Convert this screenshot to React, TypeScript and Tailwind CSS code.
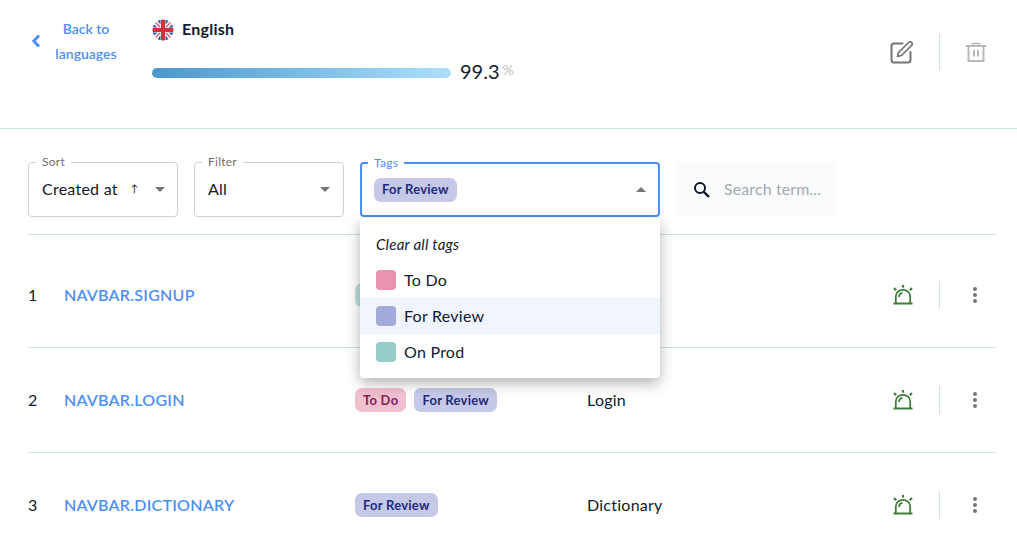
import React from "react";

const rows = [
  { id: 1, key: "NAVBAR.SIGNUP", tags: ["On Prod"], value: "Sign up" },
  { id: 2, key: "NAVBAR.LOGIN", tags: ["To Do", "For Review"], value: "Login" },
  { id: 3, key: "NAVBAR.DICTIONARY", tags: ["For Review"], value: "Dictionary" },
];

const Chip = ({ label }: { label: string }) => {
  if (label === "To Do") {
    return <span className="rounded-[7px] bg-[#f0bfd0] px-2 pt-px h-6 flex items-center text-[13px] font-bold text-[#8a1f55]">{label}</span>;
  }
  if (label === "On Prod") {
    return <span className="rounded-[7px] bg-[#bfe0dc] px-2 pt-px h-6 flex items-center text-[13px] font-bold text-[#17635a]">{label}</span>;
  }
  return <span className="rounded-[7px] bg-[#c5c8e6] px-2 pt-px h-6 flex items-center text-[13px] font-bold text-[#232a7c]">{label}</span>;
};

const Caret = ({ up }: { up?: boolean }) => (
  <svg width="10" height="5" viewBox="0 0 10 5" className="shrink-0">
    <path d={up ? "M0 5 L5 0 L10 5 Z" : "M0 0 L5 5 L10 0 Z"} fill="#757575" />
  </svg>
);

const Flag = () => (
  <svg width="22" height="22" viewBox="0 0 22 22" className="shrink-0">
    <defs>
      <clipPath id="flag-clip">
        <circle cx="11" cy="11" r="10.500" />
      </clipPath>
    </defs>
    <g clipPath="url(#flag-clip)">
      <rect width="22" height="22" fill="#f4f4f4" />
      <path d="M4.500 1 L8.500 1 L8.500 5.500 Z M13.500 5.500 L13.500 1 L17.500 1 Z M1 4.500 L5.500 8.500 L1 8.500 Z M21 4.500 L16.500 8.500 L21 8.500 Z M1 17.500 L5.500 13.500 L1 13.500 Z M21 17.500 L16.500 13.500 L21 13.500 Z M8.500 21 L4.500 21 L8.500 16.500 Z M13.500 21 L17.500 21 L13.500 16.500 Z" fill="#3a5ca8" />
      <path d="M0 0 L8 8 M22 0 L14 8 M0 22 L8 14 M22 22 L14 14" stroke="#d9515c" strokeWidth="1.100" />
      <rect x="9" width="4" height="22" fill="#d32f3c" />
      <rect y="9" width="22" height="4" fill="#d32f3c" />
    </g>
  </svg>
);

const EditIcon = () => (
  <svg width="24" height="24" viewBox="0 0 24 24" fill="none" stroke="#737373" strokeWidth="2">
    <path d="M12.500 3.500 H4 a2.500 2.500 0 0 0 -2.500 2.500 V20 a2.500 2.500 0 0 0 2.500 2.500 H18 a2.500 2.500 0 0 0 2.500 -2.500 V12" strokeLinecap="round" />
    <path d="M7.500 16.500 L8.500 12.500 L18.500 2.500 C19.500 1.500 20.800 1.500 21.600 2.400 C22.500 3.200 22.500 4.500 21.500 5.500 L11.500 15.500 Z" strokeWidth="1.700" strokeLinejoin="round" />
  </svg>
);

const TrashIcon = () => (
  <svg width="20" height="20" viewBox="0 0 20 20" fill="none" stroke="#b8b8b8" strokeWidth="2">
    <path d="M0 4 H20" />
    <path d="M6.500 4 V1.500 H13.500 V4" strokeWidth="1.600" />
    <path d="M2.500 4 V19 H17.500 V4" />
    <path d="M8 8 V14.500 M12 8 V14.500" />
  </svg>
);

const SirenIcon = () => (
  <svg width="20" height="20" viewBox="0 0 20 20" fill="none" stroke="#3f7d3a" className="shrink-0">
    <path d="M2.800 18 V11.500 C2.800 7.500 6 4.800 10 4.800 C14 4.800 17.200 7.500 17.200 11.500 V18" strokeWidth="1.800" />
    <path d="M6 12 C6 9.800 7.400 8.300 9.500 7.900" strokeWidth="1.800" />
    <path d="M0.500 18.500 H19.500" strokeWidth="2" />
    <path d="M10 0 V2.600" strokeWidth="2.200" />
    <path d="M1 3 L3.200 5.200 M19 3 L16.800 5.200" strokeWidth="2.200" />
  </svg>
);

const Dots = () => (
  <div className="flex flex-col gap-[2px]">
    <span className="size-1 rounded-full bg-[#757575]" />
    <span className="size-1 rounded-full bg-[#757575]" />
    <span className="size-1 rounded-full bg-[#757575]" />
  </div>
);

const Legend = ({ label, focused }: { label: string; focused?: boolean }) => (
  <span className={focused
    ? "absolute -top-[8px] left-[6px] bg-white px-[6px] text-xs leading-[14px] text-[#4d8ff7]"
    : "absolute -top-[8px] left-[7px] bg-white px-[6px] text-xs leading-[14px] text-[#6f6f6f]"}>
    {label}
  </span>
);

const MenuItem = ({ label, color, active }: { label: string; color: string; active?: boolean }) => (
  <div className={active ? "flex h-9 items-center gap-2 bg-[#f0f4fc] px-4" : "flex h-9 items-center gap-2 px-4"}>
    <span className={`size-5 rounded-[4px] ${color}`} />
    <span>{label}</span>
  </div>
);

export default function App() {
  return (
    <div className="h-[555px] overflow-hidden bg-white font-['Lato',sans-serif] text-base tracking-[0.25px] text-[#111a2e]">
      <header className="flex h-[129px] items-start border-b border-[#cfe2e8] pl-[31px] pr-[31px]">
        <a className="mt-[16px] flex items-center gap-[13px] text-sm font-semibold leading-[25px] tracking-normal text-[#4d8ff7]">
          <svg width="10" height="14" viewBox="0 0 10 14" fill="none" stroke="#4d8ff7" strokeWidth="2.800" className="shrink-0">
            <path d="M8 1.500 L2.800 7 L8 12.500" />
          </svg>
          <span className="w-[64px] text-center">Back to languages</span>
        </a>
        <div className="ml-[34px] mt-[17px] flex flex-col">
          <div className="flex items-center gap-2">
            <Flag />
            <span className="mb-[2px] font-bold">English</span>
          </div>
          <div className="flex items-start">
            <div className="mt-[25px] h-[10px] w-[299px] rounded-full bg-linear-to-r from-[#4a97cb] to-[#addffb]" />
            <span className="ml-[9px] mt-[15px] text-xl leading-[26px] tracking-normal">99.3</span>
            <span className="ml-[3px] mt-[17px] text-sm leading-5 tracking-normal text-[#bdbdbd]">%</span>
          </div>
        </div>
        <div className="ml-auto mt-[34px] flex h-9 items-center">
          <span className="ml-[1px]">
            <EditIcon />
          </span>
          <div className="ml-[25px] mr-[26px] h-9 w-px bg-[#cfe2e8]" />
          <TrashIcon />
        </div>
      </header>

      <div className="ml-[28px] mr-[21px]">
        <div className="flex h-[106px] items-start gap-4 border-b border-[#cfe2e8] pt-[33px]">
          <div className="relative flex h-[55px] w-[150px] items-center justify-between rounded border border-[#cfcfcf] pl-[13px] pr-[12px]">
            <Legend label="Sort" />
            <span className="mb-[2px] flex items-center gap-[13px]">
              Created at
              <span className="text-[10px]">↑</span>
            </span>
            <Caret />
          </div>
          <div className="relative flex h-[55px] w-[150px] items-center justify-between rounded border border-[#cfcfcf] pl-[13px] pr-[13px]">
            <Legend label="Filter" />
            <span className="mb-[2px]">All</span>
            <Caret />
          </div>
          <div className="relative flex h-[55px] w-[300px] items-center justify-between rounded border-2 border-[#4d8ff7] pl-3 pr-[12px]">
            <Legend label="Tags" focused />
            <Chip label="For Review" />
            <Caret up />
            <div className="absolute left-[-2px] top-[54px] z-10 w-[300px] rounded bg-white pb-2 pt-2 shadow-[0_5px_14px_rgba(0,0,0,0.3)]">
              <div className="flex h-9 items-center px-4 text-[15px] italic">Clear all tags</div>
              <MenuItem label="To Do" color="bg-[#e893b0]" />
              <MenuItem label="For Review" color="bg-[#a3a9d8]" active />
              <MenuItem label="On Prod" color="bg-[#94cdc6]" />
            </div>
          </div>
          <div className="flex h-[55px] w-[160px] items-center gap-[13px] rounded-lg bg-[#fafbfd] pl-[17px]">
            <svg width="18" height="18" viewBox="0 0 18 18" fill="none" stroke="#0f1626" strokeWidth="2" className="shrink-0">
              <circle cx="7" cy="7" r="5" />
              <path d="M10.800 10.800 L16 16" strokeWidth="2.400" />
            </svg>
            <span className="mb-[2px] tracking-[0.1px] text-[#a4a8af]">Search term...</span>
          </div>
        </div>

        {rows.map((row, i) => (
          <div key={row.id} className={i === 0
            ? "flex h-[113px] items-center border-b border-[#cfe2e8] pt-[8px]"
            : "flex h-[105px] items-center border-b border-[#cfe2e8]"}>
            <span className="w-[36px]">{row.id}</span>
            <span className="w-[291px] font-semibold text-[#4d8ff7]">{row.key}</span>
            <div className="flex w-[232px] gap-2">
              {row.tags.map((tag) => (
                <Chip key={tag} label={tag} />
              ))}
            </div>
            <span>{row.value}</span>
            <div className="ml-auto flex h-7 items-center pr-[19px]">
              <SirenIcon />
              <div className="ml-[26px] mr-[33px] h-7 w-px bg-[#cfe2e8]" />
              <Dots />
            </div>
          </div>
        ))}
      </div>
    </div>
  );
}
